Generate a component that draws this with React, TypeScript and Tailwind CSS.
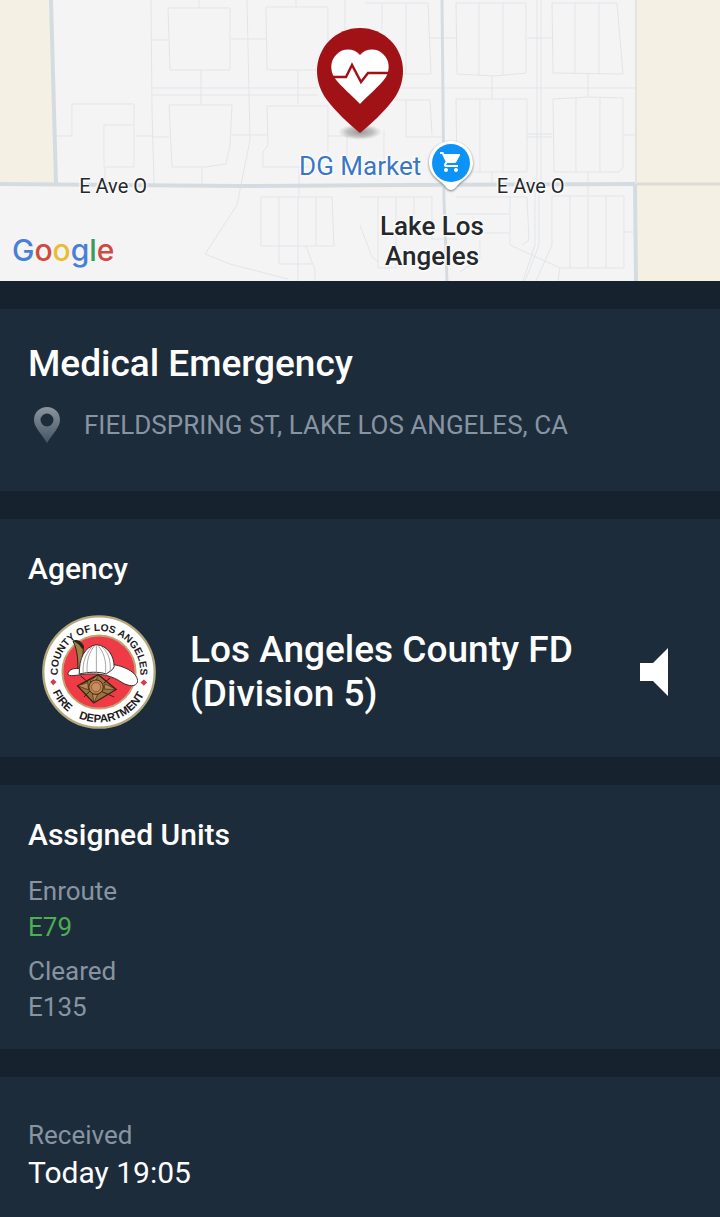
import React from "react";
import { MdShoppingCart } from "react-icons/md";

interface UnitGroup {
  status: string;
  units: string[];
  active?: boolean;
}

const unitGroups: UnitGroup[] = [
  { status: "Enroute", units: ["E79"], active: true },
  { status: "Cleared", units: ["E135"] },
];

const LABEL_HALO =
  "[text-shadow:0_0_2px_#fff,0_0_3px_#fff,1px_1px_2px_#fff,-1px_-1px_2px_#fff]";

const MapStreets: React.FC = () => (
  <svg
    viewBox="0 0 720 281"
    preserveAspectRatio="xMidYMid slice"
    className="h-full w-full"
    aria-hidden="true"
  >
    <rect width="720" height="281" fill="#f4f4f5" />
    <path d="M0 0H51L55 184H0Z" fill="#f4f0e4" />
    <path d="M637 0H720V281H637Z" fill="#f4f0e4" />

    <g fill="none" stroke="#e2e5e8" strokeWidth="1">
      {/* west blocks */}
      <path d="M151 0L152 110L154 184M152 88H318M152 95H318M247 0L250 140L240 190L237 205L205 254L230 264L288 279" />
      <path d="M168 8H230V70H170ZM266 7H328V70H267ZM199 0V8M296 0V7M152 40H168M231 39H266M201 70V104M298 70V104" />
      <path d="M169 105H232L230 145L226 164L205 167H172ZM267 106H328V152M267 106L268 145L263 152V167H318M152 137H169M232 135H267M202 167V184M299 167V196" />
      <path d="M57 136H72V104H134V167H105V184M104 167V125H134M136 136H152" />
      <path d="M261 197H332L334 246H261ZM279 197V264H312M298 197V281M316 197V246M306 246L315 270V281" />
      <path d="M345 0V30M328 136H350M347 136V160" />
      {/* centre blocks */}
      <path d="M365 3H428L431 74H400M382 3V30M406 3V74M395 88H637M430 38H456M395 100H430L432 135M406 100V137H442M384 130V160" />
      <path d="M360 197H432V240M378 197V240M396 197V268H378V240M360 225L372 257L378 262M414 197V215M432 239H457" />
      {/* east blocks */}
      <path d="M456 3H526V73L494 76L457 74ZM479 3V75M503 3V75M552 3H617L623 74L553 73ZM575 3V74M599 3V74M537 0V184M541 0V184M527 38H552" />
      <path d="M456 99H527V172H457ZM480 99V172M503 99V172M553 99L590 97L623 98V168L619 172H554ZM576 98V172M600 98V172M527 134H552M527 137H552M624 135H637M492 76V99M588 74V97M492 172V184M588 172V196" />
      <path d="M456 197H527L529 240L522 245M456 214H509M510 197V245L560 268H624V196H552V245L536 281M570 196V268M588 196V268M606 196V268M456 233H509M539 190V245L525 281M535 190V245L523 281M624 232H636M560 268L558 281M480 240V258L460 272" />
    </g>

    <g fill="none" stroke="#d5dce1">
      <path d="M51 0L56 184" strokeWidth="4" />
      <path d="M0 184L240 186L400 185L637 184" strokeWidth="4" />
      <path d="M637 184H720" strokeWidth="3" stroke="#dddbd4" />
      <path d="M442 0L444 200L447 281" strokeWidth="3" />
      <path d="M636 0V184" strokeWidth="2" stroke="#e3e5e5" />
      <path d="M635 184L636 281" strokeWidth="4" />
    </g>
  </svg>
);

const EmergencyPin: React.FC = () => (
  <svg viewBox="0 0 96 114" className="h-[114px] w-24" role="img" aria-label="Medical emergency">
    <defs>
      <radialGradient id="pinShadow">
        <stop offset="0" stopColor="#555" stopOpacity="0.6" />
        <stop offset="0.6" stopColor="#777" stopOpacity="0.4" />
        <stop offset="1" stopColor="#999" stopOpacity="0" />
      </radialGradient>
    </defs>
    <ellipse cx="48" cy="106" rx="22" ry="8" fill="url(#pinShadow)" />
    <path
      d="M48 2C24 2 5 21 5 45C5 56 9 66 15 74C24 86 37 98 48 107C59 98 72 86 81 74C87 66 91 56 91 45C91 21 72 2 48 2Z"
      fill="#a11217"
    />
    <path
      d="M48 29C42 22 31 22 25 28C18 34 18 44 22 51C29 61 40 69 48 78C56 69 67 61 74 51C78 44 78 34 71 28C65 22 54 22 48 29Z"
      fill="#fff"
    />
    <path
      d="M18 51H34L40 39L49 56L56 47H78"
      fill="none"
      stroke="#a11217"
      strokeWidth="2.5"
    />
  </svg>
);

const StorePin: React.FC = () => (
  <span className="relative block h-14 w-12">
    <svg viewBox="0 0 48 56" className="h-14 w-12 drop-shadow-[0_1px_1px_#777]" aria-hidden="true">
      <path
        d="M24 3C12 3 2 12 2 25C2 33 7 39 14 44C18 47 20 52 24 52C28 52 30 47 34 44C41 39 46 33 46 25C46 12 36 3 24 3Z"
        fill="#fff"
      />
      <circle cx="24" cy="25" r="19" fill="#0d93f8" />
    </svg>
    <MdShoppingCart className="absolute left-3 top-3 size-6 text-white" />
  </span>
);

const LocationIcon: React.FC = () => (
  <svg viewBox="0 0 26 36" className="h-9 w-[26px] shrink-0" aria-hidden="true">
    <defs>
      <linearGradient id="locFill" x1="0" y1="0" x2="0" y2="1">
        <stop offset="0" stopColor="#8a959f" />
        <stop offset="1" stopColor="#465462" />
      </linearGradient>
    </defs>
    <path
      fill="url(#locFill)"
      fillRule="evenodd"
      d="M13 0C5.500 0 0 5.500 0 13C0 20 7 26 13 36C19 26 26 20 26 13C26 5.500 20.500 0 13 0ZM13 6.500A6.500 6.500 0 1 1 13 19.500A6.500 6.500 0 1 1 13 6.500Z"
    />
  </svg>
);

const AgencySeal: React.FC = () => (
  <svg
    viewBox="37 27 346 346"
    className="size-[114px] shrink-0"
    role="img"
    aria-label="County of Los Angeles Fire Department seal"
  >
    <defs>
      <path id="sealTop" d="M86 216A125 125 0 1 1 334 216" />
      <path id="sealBottom" d="M57 200A153 153 0 0 0 363 200" />
    </defs>
    <circle cx="210" cy="200" r="169" fill="#fff" stroke="#b5a77c" strokeWidth="7" />
    <circle cx="210" cy="200" r="111" fill="#ee3b46" stroke="#c2a273" strokeWidth="6" />
    <g fill="#1c1a1c" className="font-['Liberation_Sans',sans-serif] font-bold">
      <text textAnchor="middle" className="text-[31px]">
        <textPath href="#sealTop" startOffset="50%">COUNTY OF LOS ANGELES</textPath>
      </text>
      <text textAnchor="middle" className="text-[34px]">
        <textPath href="#sealBottom" startOffset="21%">FIRE</textPath>
      </text>
      <text textAnchor="middle" className="text-[34px]">
        <textPath href="#sealBottom" startOffset="61%">DEPARTMENT</textPath>
      </text>
    </g>
    <path d="M62 230L71 221L81 230L71 240ZM336 232L346 223L356 232L346 242Z" fill="#d8384a" />

    {/* helmet */}
    <path d="M131 106C143 102 156 106 163 122L157 206L145 208C147 170 146 135 131 106Z" fill="#9c8046" stroke="#2a2118" strokeWidth="3" />
    <path d="M131 106C143 102 156 106 163 122L160 132C152 118 144 112 131 106Z" fill="#2a2118" />
    <path
      d="M150 190C128 186 114 198 116 208C128 216 152 206 180 206C220 204 250 212 280 232C300 244 322 246 327 230C329 204 292 184 256 178Z"
      fill="#fff"
      stroke="#3a2a26"
      strokeWidth="3"
    />
    <path
      d="M150 206C150 160 164 124 202 117C236 120 256 150 256 184C252 196 238 200 232 206C206 198 180 200 150 206Z"
      fill="#fff"
      stroke="#3a2a26"
      strokeWidth="3"
    />
    <path d="M198 118C178 142 172 170 174 202M202 118V202M206 118C226 142 232 166 230 202M188 124C168 148 160 172 162 202M220 124C240 144 246 166 244 196" fill="none" stroke="#777" strokeWidth="2" />

    {/* badge */}
    <path d="M208 208L262 253L194 294L145 242Z" fill="#9a7440" stroke="#35230f" strokeWidth="4" />
    <path d="M208 208L182 228L198 234ZM262 253L228 236L226 252ZM194 294L208 264L190 262ZM145 242L176 232L178 254Z" fill="#b98a58" stroke="#35230f" strokeWidth="2" />
    <path d="M154 212L176 230M244 218L224 234M256 276L220 260M164 276L182 258" stroke="#35230f" strokeWidth="3" />
    <circle cx="201" cy="246" r="22" fill="#b98452" stroke="#35230f" strokeWidth="3" />
    <circle cx="201" cy="246" r="14" fill="#c78f60" stroke="#8b3d24" strokeWidth="2" />
  </svg>
);

const GoogleLogo: React.FC = () => (
  <span className="font-['Inter',sans-serif] text-[30px] leading-10 font-medium">
    <span className="text-[#4a80d4]">G</span>
    <span className="text-[#cf4a40]">o</span>
    <span className="text-[#eabb35]">o</span>
    <span className="text-[#4a80d4]">g</span>
    <span className="text-[#3c9d58]">l</span>
    <span className="text-[#cf4a40]">e</span>
  </span>
);

const IncidentMap: React.FC = () => (
  <div className="relative aspect-[720/281] w-full overflow-hidden text-[#26292c]">
    <MapStreets />
    <span className={`absolute left-[11%] top-[62%] text-xl leading-6 ${LABEL_HALO}`}>E Ave O</span>
    <span className={`absolute left-[69%] top-[62%] text-xl leading-6 ${LABEL_HALO}`}>E Ave O</span>
    <a
      href="#dg-market"
      className="absolute right-[34%] top-[49%] flex items-center gap-1.5 text-[26px] leading-8 text-[#3b77c2]"
    >
      <span className={`whitespace-nowrap ${LABEL_HALO}`}>DG Market</span>
      <StorePin />
    </a>
    <span
      className={`absolute left-[60%] top-[75%] w-32 -translate-x-1/2 text-center text-[26px] leading-[30px] font-medium ${LABEL_HALO}`}
    >
      Lake Los Angeles
    </span>
    <span className="absolute left-1/2 top-[26px] -translate-x-1/2">
      <EmergencyPin />
    </span>
    <span className="absolute bottom-[4%] left-3">
      <GoogleLogo />
    </span>
  </div>
);

const App: React.FC = () => {
  return (
    <main className="flex min-h-screen flex-col gap-7 bg-[#16222d] font-['Roboto',sans-serif] text-white">
      <IncidentMap />

      <section className="bg-[#1d2c3b] px-7 pt-8 pb-12">
        <h1 className="text-[37px] leading-[46px] font-medium">Medical Emergency</h1>
        <p className="mt-5 flex items-center gap-6 pl-1.5 text-[26px] leading-8 text-[#8794a1]">
          <LocationIcon />
          FIELDSPRING ST, LAKE LOS ANGELES, CA
        </p>
      </section>

      <section className="bg-[#1d2c3b] px-7 pt-8 pb-7">
        <h2 className="text-[30px] leading-9 font-medium">Agency</h2>
        <div className="mt-7 flex items-center pr-6 pl-3.5">
          <AgencySeal />
          <p className="ml-[34px] flex-1 text-[37px] leading-11 font-medium">
            Los Angeles County FD (Division 5)
          </p>
          <button type="button" aria-label="Play dispatch audio" className="shrink-0">
            <svg viewBox="0 0 28 48" className="h-12 w-7" aria-hidden="true">
              <path d="M0 15H13L28 0V48L13 33H0Z" fill="#fff" />
            </svg>
          </button>
        </div>
      </section>

      <section className="bg-[#1d2c3b] px-7 pt-8 pb-6">
        <h2 className="text-[30px] leading-9 font-medium">Assigned Units</h2>
        <dl className="mt-5 flex flex-col gap-2 text-[26px] leading-9 text-[#8794a1]">
          {unitGroups.map((group) => (
            <div key={group.status}>
              <dt>{group.status}</dt>
              {group.units.map((unit) => (
                <dd key={unit} className={group.active ? "text-[#4caf50]" : ""}>
                  {unit}
                </dd>
              ))}
            </div>
          ))}
        </dl>
      </section>

      <section className="flex-1 bg-[#1d2c3b] px-7 pt-10 pb-6">
        <dl>
          <dt className="text-[26px] leading-9 text-[#8794a1]">Received</dt>
          <dd className="text-[30px] leading-10">Today 19:05</dd>
        </dl>
      </section>
    </main>
  );
};

export default App;
